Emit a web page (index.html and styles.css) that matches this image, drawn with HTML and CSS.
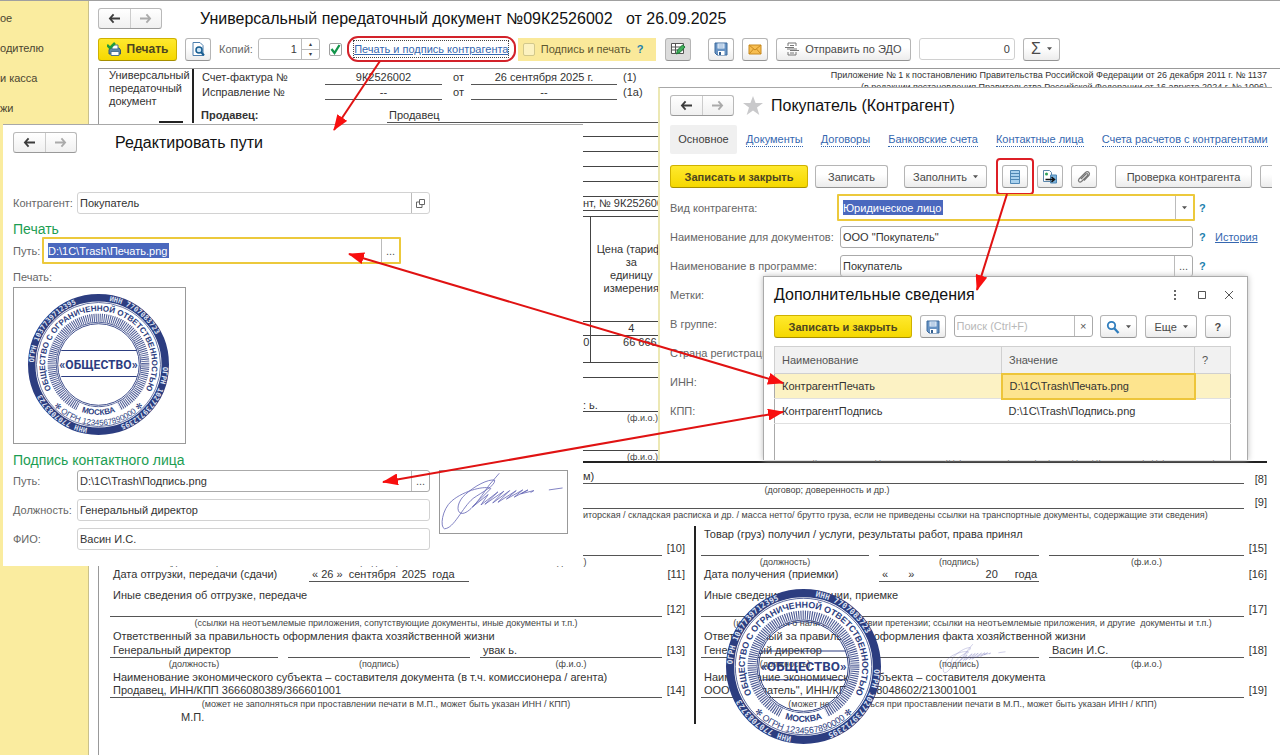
FILE: index.html
```html
<!DOCTYPE html>
<html lang="ru">
<head>
<meta charset="utf-8">
<title>Универсальный передаточный документ</title>
<link rel="stylesheet" href="styles.css">
</head>
<body>
<svg class="defs" aria-hidden="true">
  <defs>
    <symbol id="i-back" viewBox="0 0 14 12"><path d="M6 1.5L2 6l4 4.500M2.500 6H13" fill="none" stroke="currentColor" stroke-width="2"/></symbol>
    <symbol id="i-forward" viewBox="0 0 14 12"><path d="M8 1.500L12 6l-4 4.500M11.500 6H1" fill="none" stroke="currentColor" stroke-width="2"/></symbol>
    <symbol id="i-save" viewBox="0 0 14 14"><path d="M1 1h12v12H3l-2-2z" fill="#6793c4" stroke="#3d6a9c"/><path d="M3.500 1.500h7v5h-7z" fill="#e8f1fb"/><path d="M4 9h6.500v4H4z" fill="#fff"/><path d="M5 10h2v3H5z" fill="#345f8f"/><path d="M4.500 3h5M4.500 5h5" stroke="#8fb0d4"/></symbol>
    <symbol id="i-caret" viewBox="0 0 6 4"><path d="M0 0h6L3 3.500z" fill="#555"/></symbol>
    <path id="ring-outer" d="M6 70a64 64 0 1 1 128 0a64 64 0 1 1 -128 0"/>
    <path id="ring-name" d="M70 123a53 53 0 1 1 0-106a53 53 0 1 1 0 106"/>
    <path id="ring-ogrn" d="M9.500 70a60.500 60.500 0 0 0 121 0"/>
    <path id="ring-city" d="M20 70a50 50 0 0 0 100 0"/>
    <symbol id="stamp" viewBox="0 0 140 140">
      <circle cx="70" cy="70" r="53" fill="none" stroke="#fff" stroke-width="22"/>
      <circle cx="70" cy="70" r="66.300" fill="none" stroke="#2c3d80" stroke-width="7.400"/>
      <circle cx="70" cy="70" r="61.600" fill="none" stroke="#2c3d80" stroke-width=".7"/>
      <circle cx="70" cy="70" r="46.500" fill="none" stroke="#4d5b95" stroke-width="8" stroke-dasharray="1 1"/>
      <circle cx="70" cy="70" r="42" fill="none" stroke="#2c3d80" stroke-width=".8"/>
      <circle cx="70" cy="70" r="40.500" fill="none" stroke="#2c3d80" stroke-width=".9"/>
      <path d="M49.500 112a46.500 46.500 0 0 0 41 0" fill="none" stroke="#fff" stroke-width="9"/>
      <path d="M33 56h75M33 82h75" stroke="#2c3d80" stroke-width="1"/>
      <g class="stamp-edge">
        <text><textPath href="#ring-outer" startOffset="2">ОГРН 1037739712395</textPath></text>
        <text><textPath href="#ring-outer" startOffset="111">ИНН 7707083723</textPath></text>
        <text><textPath href="#ring-outer" startOffset="203">ОГРН 1027739712395</textPath></text>
        <text><textPath href="#ring-outer" startOffset="312">ИНН 7707083723</textPath></text>
      </g>
      <text class="stamp-name"><textPath href="#ring-name" startOffset="50%">ОБЩЕСТВО С ОГРАНИЧЕННОЙ ОТВЕТСТВЕННОСТЬЮ</textPath></text>
      <text class="stamp-ogrn"><textPath href="#ring-ogrn" startOffset="50%">✻ ОГРН 1234567890000 ✻</textPath></text>
      <text class="stamp-city"><textPath href="#ring-city" startOffset="50%">МОСКВА</textPath></text>
      <text class="stamp-title" x="70" y="74">«ОБЩЕСТВО»</text>
    </symbol>
    <symbol id="signature" viewBox="0 0 386 190"><path d="M180 7L150 42C118 88 88 132 64 130C46 126 52 92 76 72C104 46 146 24 166 28C168 46 128 64 100 84C66 112 42 176 12 177C-2 172 4 118 34 92C74 58 140 44 154 54L98 110L146 72L124 104L176 64L136 102L194 62L160 98L212 60L176 96L232 60L202 86L252 58L226 80L268 58L246 70L286 60L276 66M332 58L374 52" fill="none" stroke="#6566b5" stroke-width="2.500"/></symbol>
  </defs>
</svg>

<div class="app">
  <nav class="sidebar">
    <a href="#">ое</a><a href="#">одителю</a><a href="#">и касса</a><a href="#">жи</a>
  </nav>
  <main class="main">
    <header class="head">
      <div class="navpair"><button aria-label="Назад"><svg><use href="#i-back"/></svg></button><button aria-label="Вперед" class="dim"><svg><use href="#i-forward"/></svg></button></div>
      <h1>Универсальный передаточный документ №09К2526002 &nbsp; от 26.09.2025</h1>
    </header>
    <div class="toolbar">
      <button class="btn primary print"><svg class="i14" viewBox="0 0 14 14"><path d="M3 6h9l1.500 2v4H2V8z" fill="#5c86a8" stroke="#34566f"/><path d="M5 3h6v4H5zM4 9.500h8v4H4z" fill="#fff" stroke="#4d7390"/><path d="M0 3l3 3 5-5" stroke="#1f9a3c" stroke-width="2.500" fill="none"/></svg>Печать</button>
      <button class="btn icon" aria-label="Просмотр"><svg class="i14" viewBox="0 0 14 14"><path d="M2 .500h7l3 3v10H2z" fill="#fff" stroke="#4d7fae"/><circle cx="8" cy="8" r="3" fill="#cfe6f7" stroke="#175d91" stroke-width="1.500"/><path d="M10 10l3 3.500" stroke="#175d91" stroke-width="2"/></svg></button>
      <label class="copies" for="copies">Копий:</label>
      <div class="spinner"><input id="copies" value="1"><span class="steps"><button aria-label="Больше">▴</button><button aria-label="Меньше">▾</button></span></div>
      <div class="checkbox"><input type="checkbox" id="with-stamp" checked aria-label="Печать и подпись контрагента"><svg viewBox="0 0 13 13"><path d="M2.500 6l3 4 5-8" fill="none" stroke="#12954a" stroke-width="2.300"/></svg></div>
      <a class="marked" href="#"><span>Печать и подпись контрагента</span></a>
      <div class="sign"><input type="checkbox" id="sign"><label for="sign">Подпись и печать</label><a href="#">?</a></div>
      <button class="btn icon pressed" aria-label="Редактирование"><svg class="i15" viewBox="0 0 15 14"><path d="M1 1.500h12v10H1zM1 5h12M1 8h12M5 1.500v10" fill="#fff" stroke="#555"/><path d="M6 12l1-4 5-5 2.500 2-5 5.500z" fill="#3fae5a" stroke="#1d7b38"/></svg></button>
      <button class="btn icon save" aria-label="Сохранить"><svg class="i14"><use href="#i-save"/></svg></button>
      <button class="btn icon" aria-label="Отправить по почте"><svg class="i14" viewBox="0 0 14 14"><path d="M1 3h12v9H1z" fill="#f7be52" stroke="#c98a1f"/><path d="M1 3l6 5 6-5M1 12l4.500-5M13 12L8.500 7" fill="none" stroke="#c98a1f"/></svg></button>
      <button class="btn edo"><svg class="i14" viewBox="0 0 14 14"><path d="M3 4V1h8v3M3 10v3h8v-3M5 3.500h4M5 11h4M0 5.500h9M5 8.500h9M2 7h10" fill="none" stroke="#777"/></svg>Отправить по ЭДО</button>
      <input class="total" value="0" aria-label="Сумма">
      <button class="btn sigma"><b>Σ</b><svg class="caret"><use href="#i-caret"/></svg></button>
    </div>

    <section class="doc">
      <div class="doc-head">
        <div class="doc-name">Универсальный передаточный документ<i></i></div>
        <div class="invoice">
          <div class="inv-row"><span>Счет-фактура №</span><span class="u">9К2526002</span><span>от</span><span class="u">26 сентября 2025 г.</span><span>(1)</span></div>
          <div class="inv-row"><span>Исправление №</span><span class="u">--</span><span>от</span><span class="u">--</span><span>(1а)</span></div>
          <div class="seller"><b>Продавец:</b><span>Продавец</span></div>
        </div>
        <p class="appendix">Приложение № 1 к постановлению Правительства Российской Федерации от 26 декабря 2011 г. № 1137<br>(в редакции постановления Правительства Российской Федерации от 16 августа 2024 г. № 1096)</p>
      </div>
      <div class="doc-body">
        <div class="line"></div><div class="line"></div><div class="line"></div><div class="line"></div><div class="line"></div>
        <div class="line shipping">нт, № 9К2526002</div>
        <table class="goods">
          <tr class="goods-head"><th></th><th>Цена (тариф)<br>за<br>единицу<br>измерения</th><th></th></tr>
          <tr class="goods-num"><td></td><td>4</td><td></td></tr>
          <tr class="goods-row"><td>0</td><td class="num">66 666,67</td><td></td></tr>
        </table>
        <div class="line"></div>
        <div class="line chief">: ь.</div>
        <div class="hint fio">(ф.и.о.)</div>
        <div class="line owner"></div>
        <div class="hint req"><span>(ф.и.о.)</span><span>(реквизиты свидетельства о государственной&nbsp; регистрации индивидуального предпринимателя)</span></div>
        <div class="ruled basis"><span class="u">м)</span><em>[8]</em></div>
        <div class="hint contract">(договор; доверенность и др.)</div>
        <div class="ruled transport"><span class="u"></span><em>[9]</em></div>
        <div class="hint waybill">иторская / складская расписка и др. / масса нетто/ брутто груза, если не приведены ссылки на транспортные документы, содержащие эти сведения)</div>
      </div>
      <div class="parties">
        <div class="party">
          <div class="txt first"></div>
          <div class="ruled"><span class="u"></span><em>[10]</em></div>
          <div class="hint three"><span>(должность)</span><span>(подпись)</span><span>(ф.и.о.)</span></div>
          <div class="ruled date"><span>Дата отгрузки, передачи (сдачи)</span><span class="u">« 26 » &nbsp;сентября&nbsp; 2025 &nbsp;года</span><em>[11]</em></div>
          <div class="txt other">Иные сведения об отгрузке, передаче</div>
          <div class="ruled tall"><span class="u"></span><em>[12]</em></div>
          <div class="hint">(ссылки на неотъемлемые приложения, сопутствующие документы, иные документы и т.п.)</div>
          <div class="txt">Ответственный за правильность оформления факта хозяйственной жизни</div>
          <div class="ruled tall fields"><span class="u">Генеральный директор</span><span class="u"></span><span class="u">увак ь.</span><em>[13]</em></div>
          <div class="hint three"><span>(должность)</span><span>(подпись)</span><span>(ф.и.о.)</span></div>
          <div class="txt">Наименование экономического субъекта – составителя документа (в т.ч. комиссионера / агента)</div>
          <div class="ruled"><span class="u">Продавец, ИНН/КПП 3666080389/366601001</span><em>[14]</em></div>
          <div class="hint">(может не заполняться при проставлении печати в М.П., может быть указан ИНН / КПП)</div>
          <div class="txt mp">М.П.</div>
        </div>
        <div class="party buyer">
          <div class="txt first">Товар (груз) получил / услуги, результаты работ, права принял</div>
          <div class="ruled fields"><span class="u"></span><span class="u"></span><span class="u"></span><em>[15]</em></div>
          <div class="hint three"><span>(должность)</span><span>(подпись)</span><span>(ф.и.о.)</span></div>
          <div class="ruled date"><span>Дата получения (приемки)</span><span class="u got"><i>«</i><i>»</i><i>20</i><i>года</i></span><em>[16]</em></div>
          <div class="txt other">Иные сведения о получении, приемке</div>
          <div class="ruled tall"><span class="u"></span><em>[17]</em></div>
          <div class="hint">(информация о наличии/отсутствии претензии; ссылки на неотъемлемые приложения, и другие&nbsp; документы и т.п.)</div>
          <div class="txt">Ответственный за правильность оформления факта хозяйственной жизни</div>
          <div class="ruled tall fields"><span class="u">Генеральный директор</span><span class="u"></span><span class="u">Васин И.С.</span><em>[18]</em></div>
          <div class="hint three"><span>(должность)</span><span>(подпись)</span><span>(ф.и.о.)</span></div>
          <div class="txt">Наименование экономического субъекта – составителя документа</div>
          <div class="ruled"><span class="u">ООО "Покупатель", ИНН/КПП 2128048602/213001001</span><em>[19]</em></div>
          <div class="hint">(может не заполняться при проставлении печати в М.П., может быть указан ИНН / КПП)</div>
          <svg class="doc-stamp"><use href="#stamp"/></svg>
          <svg class="doc-sign"><use href="#signature"/></svg>
        </div>
      </div>
    </section>
  </main>

  <section class="window paths">
    <header class="head">
      <div class="navpair"><button aria-label="Назад"><svg><use href="#i-back"/></svg></button><button aria-label="Вперед" class="dim"><svg><use href="#i-forward"/></svg></button></div>
      <h2>Редактировать пути</h2>
    </header>
    <div class="prow"><label for="p-agent">Контрагент:</label><div class="field"><input id="p-agent" value="Покупатель"><button aria-label="Открыть"><svg class="i9" viewBox="0 0 9 9"><path d="M3.500 .500h5v5h-5zM3.500 3H.500v5.500H6V5.500" fill="none" stroke="#666"/></svg></button></div></div>
    <h3>Печать</h3>
    <div class="prow stamp-path"><label for="p-stamp">Путь:</label><div class="field focus"><input id="p-stamp" class="sel" value="D:\1С\Trash\Печать.png"><button>...</button></div></div>
    <p class="caption">Печать:</p>
    <div class="picture"><svg><use href="#stamp"/></svg></div>
    <h3 class="contact">Подпись контактного лица</h3>
    <div class="contact-grid">
      <div class="rows">
        <div class="prow"><label for="p-sign">Путь:</label><div class="field strong"><input id="p-sign" value="D:\1С\Trash\Подпись.png"><button>...</button></div></div>
        <div class="prow"><label for="p-post">Должность:</label><div class="field"><input id="p-post" value="Генеральный директор"></div></div>
        <div class="prow"><label for="p-fio">ФИО:</label><div class="field"><input id="p-fio" value="Васин И.С."></div></div>
      </div>
      <svg class="sign-pic"><use href="#signature"/></svg>
    </div>
  </section>

  <section class="window agent">
    <header class="head">
      <div class="navpair"><button aria-label="Назад"><svg><use href="#i-back"/></svg></button><button aria-label="Вперед" class="dim"><svg><use href="#i-forward"/></svg></button></div>
      <svg class="star" viewBox="0 0 20 19"><path d="M10 0l2.600 7H20l-6 4.500L16.300 19 10 14.500 3.700 19 6 11.500 0 7h7.400z" fill="#c9c9cb"/></svg>
      <h2>Покупатель (Контрагент)</h2>
    </header>
    <nav class="tabs"><span class="current">Основное</span><a href="#">Документы</a><a href="#">Договоры</a><a href="#">Банковские счета</a><a href="#">Контактные лица</a><a href="#">Счета расчетов с контрагентами</a></nav>
    <div class="tools">
      <button class="btn primary w138">Записать и закрыть</button>
      <button class="btn w72">Записать</button>
      <button class="btn fill">Заполнить<svg class="caret"><use href="#i-caret"/></svg></button>
      <span class="boxed"><button class="btn icon" aria-label="Дополнительные сведения"><svg class="i14" viewBox="0 0 14 14"><path d="M2.500 .500h9v13h-9z" fill="#a9d1ee" stroke="#4f87b5"/><path d="M3 3.500h8M3 6.500h8M3 9.500h8" stroke="#4f87b5"/></svg></button></span>
      <button class="btn icon" aria-label="Связанные"><svg class="i15" viewBox="0 0 15 14"><path d="M1 .500h6l2 2v9H1z" fill="#fff" stroke="#5a86ab"/><path d="M8 5h6v8H8z" fill="#7cb3dd" stroke="#4f87b5"/><circle cx="4" cy="4" r="1.500" fill="#2da05a"/><path d="M3 9.500h8M9 7l3 2.500L9 12" fill="none" stroke="#111" stroke-width="1.500"/></svg></button>
      <button class="btn icon" aria-label="Файлы"><svg class="i14" viewBox="0 0 14 14"><path d="M4 9l5-5c1.500-1 2.500.500 1.500 1.500l-6 6c-2 1.500-4-.500-2.500-2.500l6.500-6.500c2.500-2 5 .500 3.500 3L7 10.500" fill="none" stroke="#777" stroke-width="1.200"/></svg></button>
      <button class="btn check">Проверка контрагента</button>
      <button class="btn more" aria-label="Еще"></button>
    </div>
    <div class="form">
      <label for="a-kind">Вид контрагента:</label><div class="field focus"><input id="a-kind" class="sel kind" value="Юридическое лицо"><button aria-label="Выбрать"><svg class="caret"><use href="#i-caret"/></svg></button></div><a href="#" class="q">?</a><span></span>
      <label for="a-doc">Наименование для документов:</label><div class="field strong"><input id="a-doc" value="ООО &quot;Покупатель&quot;"></div><a href="#" class="q">?</a><a href="#" class="hist">История</a>
      <label for="a-name">Наименование в программе:</label><div class="field strong"><input id="a-name" value="Покупатель"><button>...</button></div><a href="#" class="q">?</a><span></span>
    </div>
    <div class="rest"><span>Метки:</span><span>В группе:</span><span>Страна регистрации:</span><span>ИНН:</span><span>КПП:</span></div>
  </section>

  <section class="window extra">
    <header class="xhead"><h2>Дополнительные сведения</h2>
      <button aria-label="Меню"><svg class="i10" viewBox="0 0 10 10"><path d="M4 0h2v2H4zM4 4h2v2H4zM4 8h2v2H4z" fill="#666"/></svg></button>
      <button aria-label="Развернуть"><svg class="i10" viewBox="0 0 10 10"><path d="M1.500 1.500h7v7h-7z" fill="none" stroke="#555"/></svg></button>
      <button aria-label="Закрыть"><svg class="i10" viewBox="0 0 10 10"><path d="M1 1l8 8M9 1L1 9" stroke="#555"/></svg></button>
    </header>
    <div class="xtools">
      <button class="btn primary w138">Записать и закрыть</button>
      <button class="btn icon" aria-label="Сохранить"><svg class="i14"><use href="#i-save"/></svg></button>
      <div class="field search"><input placeholder="Поиск (Ctrl+F)" aria-label="Поиск"><button>×</button></div>
      <button class="btn find" aria-label="Найти"><svg class="i14" viewBox="0 0 14 14"><circle cx="5.500" cy="5.500" r="3.700" fill="none" stroke="#2f7dbd" stroke-width="1.800"/><path d="M8 8l4.500 5" stroke="#2f7dbd" stroke-width="2.300"/></svg><svg class="caret"><use href="#i-caret"/></svg></button>
      <button class="btn esche">Еще<svg class="caret"><use href="#i-caret"/></svg></button>
      <button class="btn icon"><b>?</b></button>
    </div>
    <table class="xtable">
      <thead><tr><th>Наименование</th><th>Значение</th><th>?</th></tr></thead>
      <tbody><tr class="active"><td>КонтрагентПечать</td><td class="cell">D:\1С\Trash\Печать.png</td><td></td></tr>
      <tr><td>КонтрагентПодпись</td><td>D:\1С\Trash\Подпись.png</td><td></td></tr>
      <tr class="void"><td colspan="3"></td></tr></tbody>
    </table>
  </section>

  <svg class="arrows" viewBox="0 0 1280 755" aria-hidden="true">
    <defs><marker id="tip" viewBox="0 0 16 12" refX="15" refY="6" markerWidth="16" markerHeight="12" markerUnits="userSpaceOnUse" orient="auto-start-reverse"><path d="M0 0l16 6-16 6z" fill="#f80f0f"/></marker></defs>
    <g fill="none" stroke="#e01212" stroke-width="2">
      <path d="M380 61L334 130" marker-end="url(#tip)"/>
      <path d="M349 254L783 383" marker-start="url(#tip)" marker-end="url(#tip)"/>
      <path d="M383 482L783 412" marker-start="url(#tip)" marker-end="url(#tip)"/>
      <path d="M1007 194L977 290" marker-end="url(#tip)"/>
    </g>
  </svg>
</div>
</body>
</html>
```
FILE: styles.css
```css
* { box-sizing: border-box; }
body { margin: 0; background: #fff; font: 12px/14px "Liberation Sans", Arial, sans-serif; color: #3c3c3c; }
h1, h2, h3, p { margin: 0; font-weight: normal; }
button, input { font: inherit; color: inherit; margin: 0; padding: 0; }
button { border: 0; background: none; }
a { color: #3567b0; }
.defs { position: absolute; width: 0; height: 0; }
.app { position: relative; display: flex; min-height: 100vh; overflow: hidden; border-top: 1px solid #a0a0a0; }

.sidebar { width: 89px; flex: none; background: #faec9f; border-right: 1px solid #c9c08c; padding-top: 9px; font-size: 11px; }
.sidebar a { display: block; height: 30px; line-height: 16px; color: #4a4632; text-decoration: none; }
.main { flex: 1; min-width: 0; padding: 7px 0 0 9px; display: flex; flex-direction: column; }

.head { display: flex; align-items: center; }
h1, h2 { font-size: 16px; line-height: 20px; color: #111; white-space: nowrap; }
.head h1, .paths .head h2 { margin-left: 38px; }
.navpair { display: flex; flex: none; width: 64px; height: 21px; border: 1px solid #b9b9b9; border-bottom-color: #999; border-radius: 3px; background: linear-gradient(#fff, #f0f0f0); }
.navpair button { flex: 1; display: flex; align-items: center; justify-content: center; color: #3c3c3c; }
.navpair button + button { border-left: 1px solid #ccc; }
.navpair .dim { color: #aaa; }
.navpair svg { width: 13px; height: 11px; }

.btn { height: 23px; flex: none; display: flex; align-items: center; justify-content: center; gap: 6px; border: 1px solid #b5b5b5; border-bottom-color: #949494; border-radius: 3px; background: linear-gradient(#fff 40%, #ececec); color: #4a4a4a; white-space: nowrap; }
.primary { background: linear-gradient(#ffe92e, #f5d800); border-color: #cfb100; border-bottom-color: #a68f00; font-weight: bold; color: #4c4520; }
.icon { width: 26px; }
.pressed { background: #dcdcdc; }
.i14 { width: 14px; height: 14px; }
.i15 { width: 16px; height: 14px; }
.i9 { width: 9px; height: 9px; }
.i10 { width: 10px; height: 10px; }
.caret { width: 5px; height: 4px; }

.toolbar { display: flex; align-items: center; margin: 8px 0 7px; height: 24px; font-size: 11px; }
.print { width: 79px; margin-right: 8px; font-size: 12px; }
.copies { margin: 0 5px 0 8px; color: #666; }
.spinner { display: flex; width: 62px; height: 22px; border: 1px solid #bbb; border-radius: 3px; }
.spinner input { width: 42px; border: 0; text-align: right; padding-right: 4px; background: none; }
.steps { flex: 1; display: flex; flex-direction: column; border-left: 1px solid #bbb; }
.steps button { flex: 1; font-size: 6px; line-height: 8px; }
.steps button + button { border-top: 1px solid #bbb; }
.checkbox { position: relative; width: 13px; height: 13px; margin: 0 5px 0 9px; }
.checkbox input { appearance: none; display: block; width: 13px; height: 13px; border: 1px solid #a0a0a0; border-radius: 2px; }
.checkbox svg { position: absolute; left: 0; top: 0; width: 13px; height: 13px; pointer-events: none; }
.marked { display: flex; align-items: center; justify-content: center; width: 169px; height: 26px; border: 2px solid #d3222a; border-radius: 11px; white-space: nowrap; }
.marked span { border: 1px dotted #444; padding: 1px 0; }
.sign { display: flex; align-items: center; gap: 6px; width: 138px; height: 23px; margin: 0 9px 0 2px; padding-left: 5px; background: #fae99a; white-space: nowrap; }
.sign input { appearance: none; width: 12px; height: 13px; border: 1px solid #d2c88c; border-radius: 2px; background: #fcf2c0; }
.sign label { color: #5e5730; }
.sign a, .q { color: #1c7fae; text-decoration: none; font-weight: bold; }
.save { margin: 0 8px 0 17px; }
.edo { width: 135px; margin-left: 8px; }
.total { width: 96px; height: 22px; margin: 0 8px; border: 1px solid #d0d0d0; border-radius: 3px; text-align: right; padding-right: 4px; }
.sigma { width: 37px; }
.sigma b { font-size: 16px; font-weight: normal; }

.doc { flex: 1; border: 1px solid #999; border-width: 1px 0 0 1px; padding-right: 13px; font-size: 11px; line-height: 14px; color: #333; }
.doc-head { display: grid; grid-template-columns: 95px 1fr 450px; height: 53px; }
.doc-name { position: relative; padding-left: 10px; line-height: 13px; border-right: 2px solid #222; }
.doc-name i { position: absolute; right: 9px; bottom: 0; width: 24px; border-top: 2px solid #222; }
.inv-row { display: grid; grid-template-columns: 123px 117px 29px 146px auto; height: 15px; padding-left: 8px; line-height: 16px; white-space: nowrap; }
.inv-row > :nth-child(3) { margin-left: 11px; }
.inv-row > :last-child { margin-left: 6px; }
.u { border-bottom: 1px solid #555; }
.inv-row .u { text-align: center; height: 16px; }
.seller { display: grid; grid-template-columns: 186px 1fr; padding: 9px 0 0 7px; line-height: 14px; }
.seller span { border-bottom: 1px solid #555; padding-left: 2px; height: 15px; }
.appendix { font-size: 9px; line-height: 12px; text-align: right; white-space: nowrap; }
.doc-body { padding-left: 484px; }
.line { height: 15px; border-bottom: 1px solid #444; white-space: nowrap; }
.shipping { height: 14px; line-height: 13px; }
.goods { width: 100%; margin-top: 5px; border-collapse: collapse; table-layout: fixed; border: 1px solid #444; border-width: 1px 0; text-align: center; line-height: 13px; }
.goods th, .goods td { font-weight: normal; padding: 0; border-bottom: 1px solid #444; }
.goods th:first-child, .goods td:first-child { width: 7px; border-right: 1px solid #444; }
.goods th:nth-child(2) { width: 82px; }
.goods .num { text-align: right; }
.goods-head { height: 105px; }
.goods-num { height: 14px; }
.goods-row { height: 27px; vertical-align: top; }
.chief { height: 34px; padding-top: 20px; }
.fio { padding-left: 44px; text-align: left !important; }
.owner { height: 27px; }
.hint { height: 12px; font-size: 9px; line-height: 12px; text-align: center; white-space: nowrap; color: #444; }
.req { display: flex; gap: 154px; padding-left: 44px; border-bottom: 2px solid #222; }
.ruled { display: grid; grid-template-columns: 1fr 23px; height: 14px; line-height: 13px; white-space: nowrap; }
.ruled em { font-style: normal; text-align: right; }
.basis { height: 21px; grid-template-rows: 21px; line-height: 32px; }
.basis .u { line-height: 26px; overflow: hidden; }
.transport { grid-template-rows: 13px; height: 13px; }
.contract { padding-right: 196px; }
.waybill { text-align: left; }
.parties { display: grid; grid-template-columns: 595px 1fr; padding-top: 5px; }
.party { position: relative; padding: 0 9px 0 11px; }
.party .hint { padding-right: 23px; }
.buyer { border-left: 2px solid #222; padding: 0 0 0 5px; }
.txt, .party .ruled .u { padding-left: 3px; }
.txt { height: 14px; white-space: nowrap; }
.first { height: 16px; line-height: 16px; }
.other { margin-top: 6px; }
.tall { height: 15px; line-height: 14px; }
.fields { grid-template-columns: 168fr 182fr 182fr 13px; column-gap: 10px; }
.buyer .fields { grid-template-columns: 168fr 160fr 195fr 13px; }
.fields em { margin-left: -6px; }
.three { display: grid; grid-template-columns: 168fr 182fr 182fr; column-gap: 10px; }
.buyer .three { grid-template-columns: 168fr 160fr 195fr; }
.date { grid-template-columns: 199px 160px 1fr; }
.buyer .date { grid-template-columns: 178px 160px 1fr; }
.date > :first-child { padding-left: 3px; }
.got { display: flex; }
.got i { font-style: normal; }
.got i:nth-child(2) { margin: 0 auto 0 20px; }
.got i:nth-child(4) { margin: 0 2px 0 17px; }
.mp { padding-left: 71px; }
.doc-stamp { position: absolute; left: 30px; top: 63px; width: 155px; height: 155px; }
.doc-sign { position: absolute; left: 246px; top: 117px; width: 66px; height: 32px; opacity: .7; }

.window { position: absolute; background: #fff; border-top: 1px solid #a8a8a8; overflow: hidden; }
.field { display: flex; align-items: center; height: 22px; flex: 1; min-width: 0; border: 1px solid #d2d2d2; border-radius: 3px; background: #fff; }
.strong { border-color: #aaa; }
.focus { height: 27px; border: 2px solid #ecc93c; border-radius: 1px; }
.field input { flex: 1; min-width: 0; border: 0; outline: 0; padding-left: 2px; background: none; color: #333; }
.field button { flex: none; align-self: stretch; width: 18px; border-left: 1px solid #bbb; color: #555; display: flex; align-items: center; justify-content: center; }
.field .sel { flex: none; width: 121px; height: 15px; margin: 0 auto 0 4px; padding: 0; background: #4a68be; color: #fff; }

.paths { left: 3px; top: 123px; width: 580px; height: 442px; padding: 7px 0 0 10px; font-size: 11px; }
.paths .head { margin-bottom: 39px; }
.prow { display: flex; align-items: center; width: 417px; color: #666; }
.prow label { width: 64px; flex: none; }
.paths h3 { margin: 7px 0 0; font-size: 14px; line-height: 16px; color: #1c9d52; }
.stamp-path { width: 388px; }
.stamp-path label { width: 29px; }
.caption { color: #666; margin: 6px 0 3px; }
.picture { width: 173px; height: 157px; border: 1px solid #999; padding: 6px 0 0 14px; }
.picture svg { width: 141px; height: 141px; display: block; }
.paths .contact { margin: 8px 0 2px; }
.contact-grid { display: flex; gap: 9px; }
.rows { display: grid; gap: 7px; }
.sign-pic { width: 129px; height: 64px; border: 1px solid #999; }

.agent { left: 658px; top: 86px; width: 614px; height: 373px; border-left: 2px solid #ece8b4; padding: 7px 0 0 10px; font-size: 11px; }
.star { width: 20px; height: 19px; margin: 0 8px 0 9px; }
.tabs { display: flex; align-items: center; margin-top: 9px; gap: 18px; white-space: nowrap; }
.tabs a { text-decoration: none; border-bottom: 1px dotted #3567b0; line-height: 13px; }
.current { background: #f0f0f0; width: 67px; line-height: 29px; text-align: center; margin-right: -9px; border-radius: 2px; }
.tools { display: flex; align-items: center; height: 37px; margin-top: 4px; }
.w138 { width: 138px; }
.w72 { width: 73px; margin: 0 16px 0 7px; }
.fill { width: 83px; }
.boxed { flex: none; display: flex; justify-content: center; align-items: center; width: 38px; height: 37px; margin: 0 3px 0 9px; border: 2px solid #dd1f26; border-radius: 4px; }
.tools > .icon + .icon { margin: 0 18px 0 8px; }
.check { width: 137px; margin-right: 8px; }
.more { width: 30px; }
.form { display: grid; grid-template-columns: 167px 358px 13px auto; grid-template-rows: 25px 24px 24px; align-items: center; row-gap: 5px; color: #666; white-space: nowrap; }
.form .strong { margin: 0 2px 0 3px; }
.form .q { padding-left: 4px; }
.hist { margin-left: 7px; }
.form .kind { width: 100px; }
.rest { display: grid; row-gap: 15px; padding-top: 10px; color: #666; }

.extra { left: 763px; top: 275px; width: 485px; height: 184px; border: 1px solid #aaa; border-bottom: 0; padding: 8px 16px 0 10px; box-shadow: 0 0 6px #bbb; font-size: 11px; }
.xhead { display: flex; align-items: center; gap: 17px; margin-right: -3px; }
.xhead h2 { flex: 1; }
.xhead button { width: 10px; height: 10px; line-height: 0; }
.xtools { display: flex; justify-content: space-between; margin: 10px 0 8px; }
.search { flex: none; width: 139px; height: 22px; border-color: #aaa; }
.search input::placeholder { color: #b8b8b8; opacity: 1; }
.find { width: 37px; }
.esche { width: 52px; }
.xtable { width: 457px; border-collapse: collapse; table-layout: fixed; text-align: left; color: #333; border: 1px solid #aaa; border-bottom: 0; }
.xtable th { height: 27px; background: #f1f1f1; font-weight: normal; color: #555; padding: 0 0 0 7px; border: 1px solid #d0d0d0; }
.xtable th:first-child { width: 227px; }
.xtable th:nth-child(2) { width: 193px; }
.xtable td { height: 25px; padding: 0 0 0 7px; border-bottom: 1px solid #e0e0e0; }
.active td { background: #fcf2c4; }
.active .cell { background: #fde48e; border: 2px solid #edc53a; }
.xtable .void td { height: 60px; }
.arrows { position: absolute; left: 0; top: -1px; width: 1280px; height: 755px; pointer-events: none; }
.stamp-edge text { font: bold 7px "DejaVu Sans Mono", monospace; fill: #dfe4f4; }
.stamp-name, .stamp-ogrn, .stamp-city, .stamp-title { fill: #2c3d80; text-anchor: middle; }
.stamp-name { font: bold 8px "Liberation Sans", sans-serif; }
.stamp-ogrn { font: 8px "Liberation Sans", "DejaVu Sans", sans-serif; }
.stamp-city { font: bold 8px "Liberation Sans", sans-serif; }
.stamp-title { font: bold 12px Roboto, "Liberation Sans", sans-serif; }
```
